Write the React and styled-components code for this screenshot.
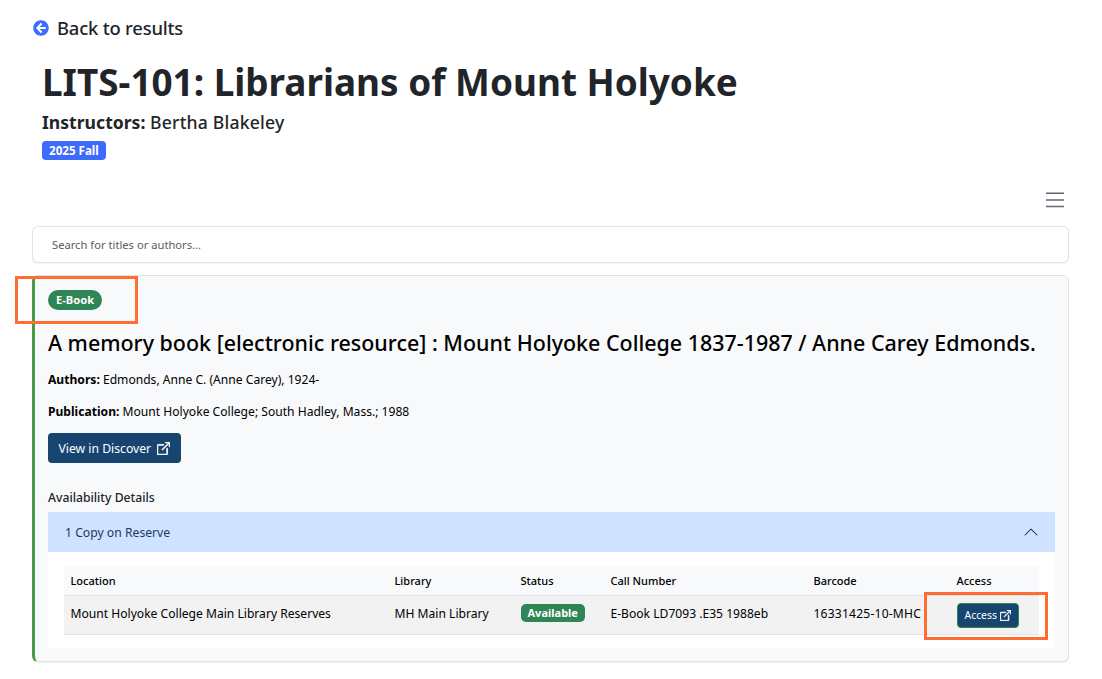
import React from "react";
import styled, { createGlobalStyle } from "styled-components";
import { FaArrowCircleLeft } from "react-icons/fa";

const Global = createGlobalStyle`
  html, body { margin: 0; padding: 0; background: #fff; }
  body { font-family: "Noto Sans", "Open Sans", "Liberation Sans", sans-serif; color: #212529; }
`;

const Page = styled.div`
  position: relative;
  width: 1102px;
  height: 679px;
  overflow: hidden;
  box-sizing: border-box;
  padding: 14px 33px 0 32px;
`;
const BackLink = styled.a`
  display: flex;
  align-items: center;
  gap: 8px;
  margin-left: 1px;
  height: 27px;
  font-size: 18.4px;
  letter-spacing: -0.2px;
  font-weight: 500;
  color: #212529;
  svg { color: #3d6bfb; }
`;
const Header = styled.header`
  padding: 0 10px;
`;
const Title = styled.h1`
  margin: 17px 0 0;
  font-size: 36.9px;
  line-height: 48px;
  font-weight: 700;
  color: #212529;
`;
const Instructors = styled.p`
  margin: 4px 0 0;
  font-size: 17.6px;
  line-height: 24px;
  b { font-weight: 700; }
`;
const InstructorName = styled.span`
  font-weight: 500;
  letter-spacing: 0.2px;
`;
const TermBadge = styled.span`
  display: inline-block;
  margin-top: 7px;
  padding: 0 7px;
  height: 19px;
  line-height: 19px;
  border-radius: 4px;
  background: #3d6bfb;
  color: #fff;
  font-size: 11.6px;
  font-weight: 700;
`;
const Toolbar = styled.div`
  display: flex;
  justify-content: flex-end;
  margin-top: 32px;
  height: 16px;
  padding-right: 5px;
`;
const Search = styled.div`
  box-sizing: border-box;
  margin-top: 18px;
  height: 37px;
  padding: 0 19px;
  display: flex;
  align-items: center;
  background: #fff;
  border: 1px solid #e3e4e6;
  border-radius: 6px;
  box-shadow: 0 1px 2px rgba(0,0,0,.05);
  font-size: 11.2px;
  color: #595c5f;
`;
const Card = styled.section`
  box-sizing: border-box;
  margin-top: 12px;
  height: 387px;
  padding: 11px 13px 13px 13px;
  background: #f8f9fa;
  border: 1px solid #e1e2e4;
  border-left: 3px solid #4a9a4a;
  border-radius: 6px;
  box-shadow: 0 1px 2px rgba(0,0,0,.06);
`;
const TypeBadge = styled.span`
  display: inline-block;
  padding: 0 8px;
  height: 20px;
  line-height: 20px;
  border-radius: 10px;
  background: #2e8555;
  color: #fff;
  font-size: 11.2px;
  font-weight: 700;
`;
const BookTitle = styled.h2`
  margin: 15px 0 0;
  font-size: 21.45px;
  line-height: 36px;
  font-weight: 500;
  color: #000;
  white-space: nowrap;
`;
const Meta = styled.p`
  margin: ${(p) => p.$top}px 0 0;
  font-size: 12.1px;
  line-height: 18px;
  color: #000;
  b { font-weight: 700; }
`;
const DarkButton = styled.a`
  display: inline-flex;
  align-items: center;
  gap: ${(p) => (p.$small ? 3 : 6)}px;
  box-sizing: border-box;
  background: #18456f;
  color: #fff;
  border-radius: 4px;
  height: ${(p) => (p.$small ? 25 : 30)}px;
  padding: 0 ${(p) => (p.$small ? 7 : 10.5)}px;
  font-size: ${(p) => (p.$small ? 10.4 : 12.2)}px;
  ${(p) => p.$small && "border: 1px solid #2e8555;"}
`;
const DiscoverRow = styled.div`
  margin-top: 12px;
  height: 30px;
`;
const SectionLabel = styled.h3`
  margin: 26px 0 0;
  font-size: 12.2px;
  line-height: 18px;
  font-weight: 500;
  color: #212529;
`;
const AccordionHeader = styled.div`
  margin-top: 5px;
  height: 40px;
  padding: 0 16px 0 17px;
  display: flex;
  align-items: center;
  justify-content: space-between;
  background: #cfe2ff;
  font-size: 12.2px;
  color: #1a3a66;
`;
const AccordionBody = styled.div`
  padding: 14px 16px 13px;
  background: #fff;
`;
const Table = styled.table`
  width: 975px;
  table-layout: fixed;
  border-collapse: collapse;
  font-size: 12.1px;
  color: #000;
`;
const Th = styled.th`
  height: 29px;
  padding: 0 6.5px;
  text-align: left;
  font-weight: 500;
  font-size: 11px;
  background: #f8f9fa;
  border-bottom: 1px solid #dee2e6;
`;
const Td = styled.td`
  height: 39px;
  box-sizing: border-box;
  padding: 0 6.5px ${(p) => (p.$flush ? 0 : 4)}px;
  background: #f2f2f2;
  border-bottom: 1px solid #dee2e6;
  white-space: nowrap;
`;
const BarcodeText = styled.span`
  letter-spacing: 0.2px;
`;
const StatusBadge = styled.span`
  display: inline-block;
  padding: 0 7px;
  height: 18px;
  line-height: 18px;
  border-radius: 5px;
  background: #2e8555;
  color: #fff;
  font-size: 11px;
  font-weight: 700;
`;
const Highlight = styled.div`
  position: absolute;
  box-sizing: border-box;
  left: ${(p) => p.$x}px;
  top: ${(p) => p.$y}px;
  width: ${(p) => p.$w}px;
  height: ${(p) => p.$h}px;
  border: 3px solid #ff6d33;
  pointer-events: none;
`;

const ExternalIcon = ({ size }) => (
  <svg width={size} height={size} viewBox="0 0 16 16" fill="currentColor" stroke="currentColor" strokeWidth="1">
    <path fillRule="evenodd" d="M8.636 3.5a.5.5 0 0 0-.5-.5H1.5A1.5 1.5 0 0 0 0 4.5v10A1.5 1.5 0 0 0 1.5 16h10a1.5 1.5 0 0 0 1.5-1.5V7.864a.5.5 0 0 0-1 0V14.5a.5.5 0 0 1-.5.5h-10a.5.5 0 0 1-.5-.5v-10a.5.5 0 0 1 .5-.5h6.636a.5.5 0 0 0 .5-.5z" />
    <path fillRule="evenodd" d="M16 .5a.5.5 0 0 0-.5-.5h-5a.5.5 0 0 0 0 1h3.793L6.146 9.146a.5.5 0 1 0 .708.708L15 1.707V5.5a.5.5 0 0 0 1 0v-5z" />
  </svg>
);
const MenuIcon = () => (
  <svg width="18" height="16" viewBox="0 0 18 16" fill="none" stroke="#5f6870" strokeWidth="1.5">
    <path d="M0 1.2h18M0 8h18M0 14.6h18" />
  </svg>
);
const ChevronUp = () => (
  <svg width="16" height="16" viewBox="0 0 16 16" fill="#1a2a4a">
    <path fillRule="evenodd" d="M7.646 4.646a.5.5 0 0 1 .708 0l6 6a.5.5 0 0 1-.708.708L8 5.707l-5.646 5.647a.5.5 0 0 1-.708-.708l6-6z" />
  </svg>
);

const columns = [
  ["Location", 324],
  ["Library", 126],
  ["Status", 90],
  ["Call Number", 203],
  ["Barcode", 143],
  ["Access", 89],
];

export default function App() {
  return (
    <Page>
      <Global />
      <BackLink><FaArrowCircleLeft size={16} />Back to results</BackLink>
      <Header>
        <Title>LITS-101: Librarians of Mount Holyoke</Title>
        <Instructors><b>Instructors:</b> <InstructorName>Bertha Blakeley</InstructorName></Instructors>
        <TermBadge>2025 Fall</TermBadge>
      </Header>
      <Toolbar><MenuIcon /></Toolbar>
      <Search>Search for titles or authors...</Search>
      <Card>
        <TypeBadge>E-Book</TypeBadge>
        <BookTitle>A memory book [electronic resource] : Mount Holyoke College 1837-1987 / Anne Carey Edmonds.</BookTitle>
        <Meta $top={10}><b>Authors:</b> Edmonds, Anne C. (Anne Carey), 1924-</Meta>
        <Meta $top={14}><b>Publication:</b> Mount Holyoke College; South Hadley, Mass.; 1988</Meta>
        <DiscoverRow><DarkButton>View in Discover <ExternalIcon size={13} /></DarkButton></DiscoverRow>
        <SectionLabel>Availability Details</SectionLabel>
        <AccordionHeader>1 Copy on Reserve<ChevronUp /></AccordionHeader>
        <AccordionBody>
          <Table>
            <colgroup>
              {columns.map(([n, w]) => <col key={n} width={w} />)}
            </colgroup>
            <thead>
              <tr>{columns.map(([n]) => <Th key={n}>{n}</Th>)}</tr>
            </thead>
            <tbody>
              <tr>
                <Td>Mount Holyoke College Main Library Reserves</Td>
                <Td>MH Main Library</Td>
                <Td><StatusBadge>Available</StatusBadge></Td>
                <Td>E-Book LD7093 .E35 1988eb</Td>
                <Td><BarcodeText>16331425-10-MHC</BarcodeText></Td>
                <Td $flush><DarkButton $small>Access <ExternalIcon size={11} /></DarkButton></Td>
              </tr>
            </tbody>
          </Table>
        </AccordionBody>
      </Card>
      <Highlight $x={15} $y={276} $w={123} $h={48} />
      <Highlight $x={924} $y={592} $w={124} $h={48} />
    </Page>
  );
}
